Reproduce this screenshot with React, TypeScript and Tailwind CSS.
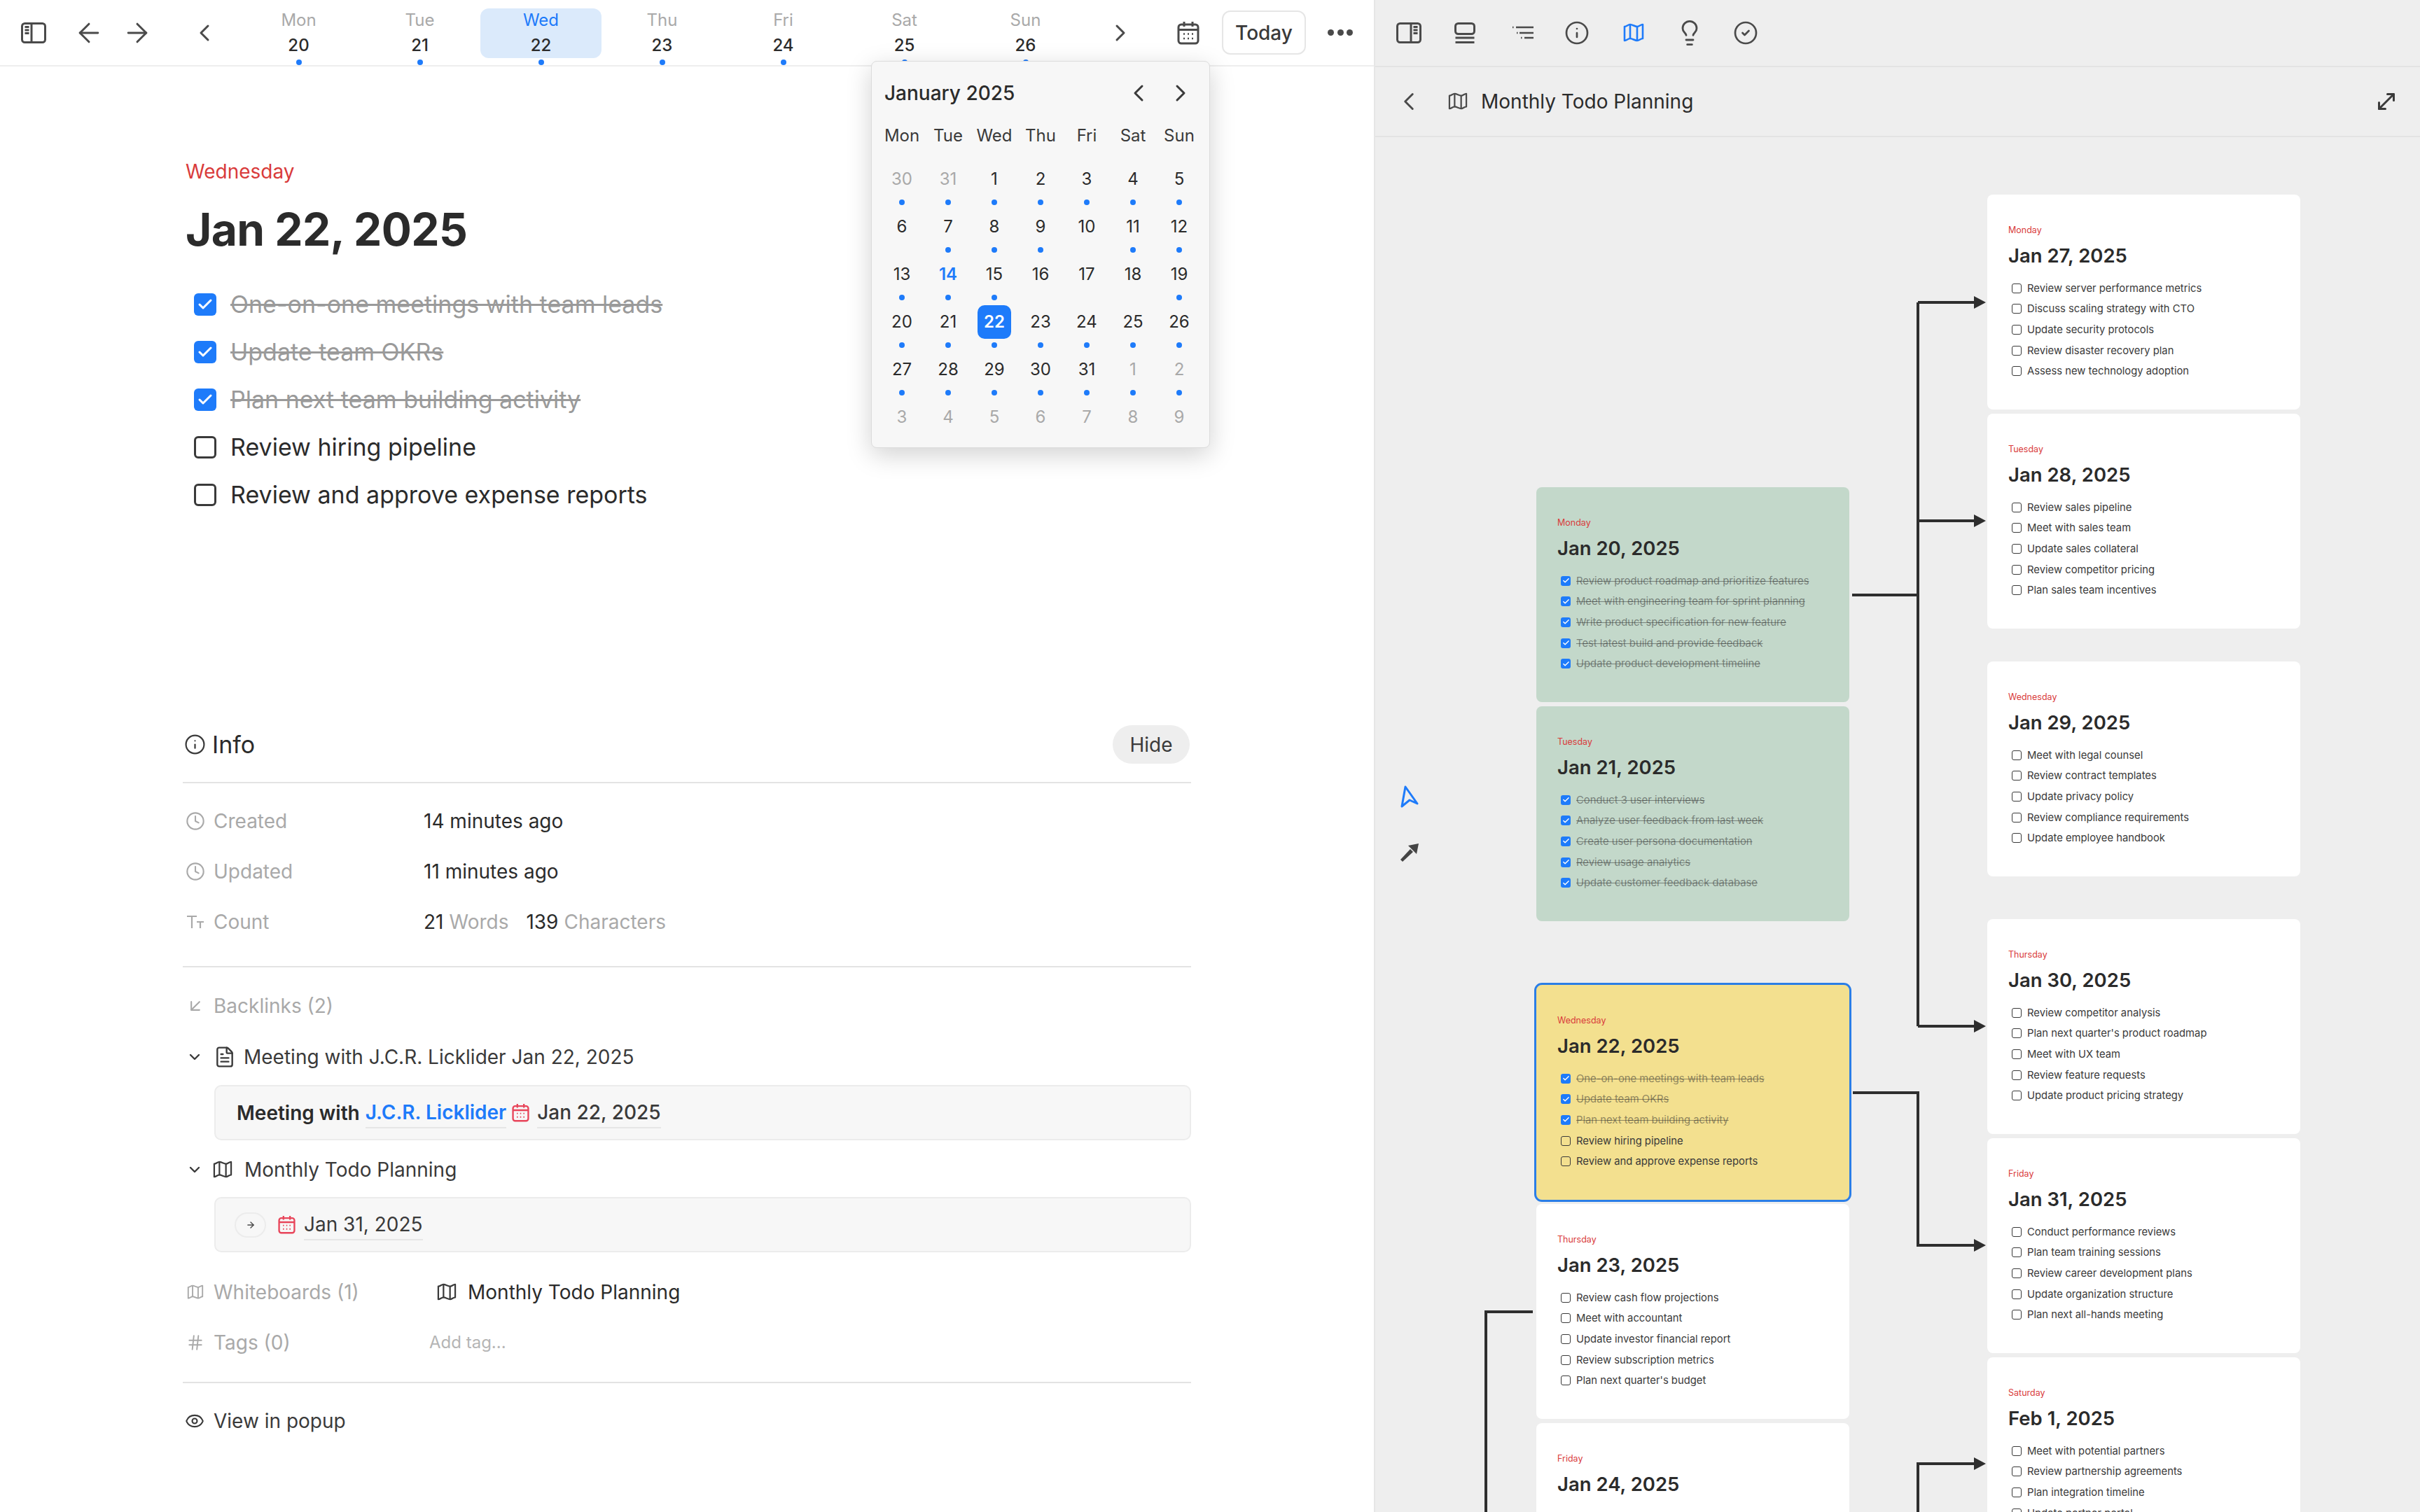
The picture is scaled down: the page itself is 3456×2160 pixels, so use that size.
import {
  ArrowDownLeft,
  ArrowLeft,
  ArrowRight,
  Check,
  ChevronDown,
  ChevronLeft,
  ChevronRight,
  CircleCheck,
  Clock,
  Eye,
  FileText,
  Hash,
  Info,
  Lightbulb,
  MoveDiagonal,
} from 'lucide-react'

const DAYS = [
  { label: 'Mon', date: 20 },
  { label: 'Tue', date: 21 },
  { label: 'Wed', date: 22, active: true },
  { label: 'Thu', date: 23 },
  { label: 'Fri', date: 24 },
  { label: 'Sat', date: 25 },
  { label: 'Sun', date: 26 },
]

const WEEK = ['Mon', 'Tue', 'Wed', 'Thu', 'Fri', 'Sat', 'Sun']

// [date, muted, has dot]
const MONTH: [number, boolean, boolean][] = [
  [30, true, true], [31, true, true], [1, false, true], [2, false, true], [3, false, true], [4, false, true], [5, false, true],
  [6, false, false], [7, false, true], [8, false, true], [9, false, true], [10, false, false], [11, false, true], [12, false, true],
  [13, false, true], [14, false, true], [15, false, true], [16, false, false], [17, false, false], [18, false, false], [19, false, true],
  [20, false, true], [21, false, true], [22, false, true], [23, false, true], [24, false, true], [25, false, true], [26, false, true],
  [27, false, true], [28, false, true], [29, false, true], [30, false, true], [31, false, true], [1, true, true], [2, true, true],
  [3, true, false], [4, true, false], [5, true, false], [6, true, false], [7, true, false], [8, true, false], [9, true, false],
]

interface CardData {
  pos: string
  day: string
  title: string
  items: string[]
  done?: number
  tone?: string
  selected?: boolean
}

const CARDS: CardData[] = [
  {
    pos: 'left-[230px] top-[500px]',
    day: 'Monday',
    title: 'Jan 20, 2025',
    tone: 'bg-[#c3d8ca]',
    done: 5,
    items: [
      'Review product roadmap and prioritize features',
      'Meet with engineering team for sprint planning',
      'Write product specification for new feature',
      'Test latest build and provide feedback',
      'Update product development timeline',
    ],
  },
  {
    pos: 'left-[230px] top-[813px]',
    day: 'Tuesday',
    title: 'Jan 21, 2025',
    tone: 'bg-[#c3d8ca]',
    done: 5,
    items: [
      'Conduct 3 user interviews',
      'Analyze user feedback from last week',
      'Create user persona documentation',
      'Review usage analytics',
      'Update customer feedback database',
    ],
  },
  {
    pos: 'left-[230px] top-[1211px]',
    day: 'Wednesday',
    title: 'Jan 22, 2025',
    tone: 'bg-[#f3e08f]',
    done: 3,
    selected: true,
    items: [
      'One-on-one meetings with team leads',
      'Update team OKRs',
      'Plan next team building activity',
      'Review hiring pipeline',
      'Review and approve expense reports',
    ],
  },
  {
    pos: 'left-[230px] top-[1524px]',
    day: 'Thursday',
    title: 'Jan 23, 2025',
    items: [
      'Review cash flow projections',
      'Meet with accountant',
      'Update investor financial report',
      'Review subscription metrics',
      "Plan next quarter's budget",
    ],
  },
  {
    pos: 'left-[230px] top-[1837px]',
    day: 'Friday',
    title: 'Jan 24, 2025',
    items: [''],
  },
  {
    pos: 'left-[874px] top-[82px]',
    day: 'Monday',
    title: 'Jan 27, 2025',
    items: [
      'Review server performance metrics',
      'Discuss scaling strategy with CTO',
      'Update security protocols',
      'Review disaster recovery plan',
      'Assess new technology adoption',
    ],
  },
  {
    pos: 'left-[874px] top-[395px]',
    day: 'Tuesday',
    title: 'Jan 28, 2025',
    items: [
      'Review sales pipeline',
      'Meet with sales team',
      'Update sales collateral',
      'Review competitor pricing',
      'Plan sales team incentives',
    ],
  },
  {
    pos: 'left-[874px] top-[749px]',
    day: 'Wednesday',
    title: 'Jan 29, 2025',
    items: [
      'Meet with legal counsel',
      'Review contract templates',
      'Update privacy policy',
      'Review compliance requirements',
      'Update employee handbook',
    ],
  },
  {
    pos: 'left-[874px] top-[1117px]',
    day: 'Thursday',
    title: 'Jan 30, 2025',
    items: [
      'Review competitor analysis',
      "Plan next quarter's product roadmap",
      'Meet with UX team',
      'Review feature requests',
      'Update product pricing strategy',
    ],
  },
  {
    pos: 'left-[874px] top-[1430px]',
    day: 'Friday',
    title: 'Jan 31, 2025',
    items: [
      'Conduct performance reviews',
      'Plan team training sessions',
      'Review career development plans',
      'Update organization structure',
      'Plan next all-hands meeting',
    ],
  },
  {
    pos: 'left-[874px] top-[1743px]',
    day: 'Saturday',
    title: 'Feb 1, 2025',
    items: [
      'Meet with potential partners',
      'Review partnership agreements',
      'Plan integration timeline',
      'Update partner portal',
    ],
  },
]

function PanelIcon({ className = '' }: { className?: string }): JSX.Element {
  return (
    <svg viewBox="0 0 36 30" className={`h-[30px] w-[36px] text-[#4a4a4a] ${className}`} fill="none" stroke="currentColor" strokeWidth="3">
      <rect x="1.5" y="1.5" width="33" height="27" rx="4" />
      <path d="M15 2v26M5.5 6.5h6M5.5 11h6M5.5 15.500h6" />
    </svg>
  )
}

function BottomPanelIcon(): JSX.Element {
  return (
    <svg viewBox="0 0 30 30" className="h-[30px] w-[30px] text-[#4a4a4a]" fill="none" stroke="currentColor" strokeWidth="3">
      <rect x="1.5" y="1.5" width="27" height="15" rx="4" />
      <path d="M1.500 22h27M1.500 28.500h27" />
    </svg>
  )
}

function TocIcon(): JSX.Element {
  return (
    <svg viewBox="0 0 32 24" className="h-[24px] w-[32px] text-[#4a4a4a]" fill="none" stroke="currentColor" strokeWidth="2.600">
      <path d="M6 4h25M11 12h20M18 19h13" />
      <path d="M1 4h1.500M7 12h1.500M13 19h1.500" />
    </svg>
  )
}

function MapIcon({ className = 'h-[28px] w-[30px] text-[#4a4a4a]', width = 2.6 }: { className?: string; width?: number }): JSX.Element {
  return (
    <svg viewBox="0 0 30 28" className={className} fill="none" stroke="currentColor" strokeWidth={width} strokeLinejoin="round">
      <path d="M2 5c3 0 5-3 8-3s7 3 10 3 5-3 8-3v20c-3 0-5 3-8 3s-7-3-10-3-5 3-8 3z" />
      <path d="M10 2v21M20 5v20" />
    </svg>
  )
}

function CalendarIcon({ className }: { className: string }): JSX.Element {
  return (
    <svg viewBox="0 0 32 34" className={className} fill="none" stroke="currentColor" strokeWidth="3">
      <rect x="2" y="5" width="28" height="27" rx="4" />
      <path d="M2 12.500h28M10 1v7M22 1v7" />
      <path d="M9 18.500h2M15 18.500h2M21 18.500h2M9 25h2M15 25h2M21 25h2" strokeWidth="2.400" />
    </svg>
  )
}

function TypeIcon(): JSX.Element {
  return (
    <svg viewBox="0 0 26 22" className="h-[22px] w-[26px] text-[#a9a9a9]" fill="none" stroke="currentColor" strokeWidth="2.200">
      <path d="M1 3h14M8 3v17M15 11h10M20 11v9" />
    </svg>
  )
}

function NavIcon(): JSX.Element {
  return (
    <svg viewBox="0 0 26 32" className="h-[32px] w-[26px] text-[#1e7bfa]" fill="none" stroke="currentColor" strokeWidth="3" strokeLinejoin="round">
      <path d="M7 2 24 26l-11-5-11 9z" />
    </svg>
  )
}

function LineToolIcon(): JSX.Element {
  return (
    <svg viewBox="0 0 26 26" className="h-[26px] w-[26px] text-[#444444]" fill="currentColor">
      <path d="M0 23 14 8l4 4L3 26z" />
      <path d="M11 3l15-3-3 15z" />
    </svg>
  )
}

function TaskCheckbox({ checked, large }: { checked: boolean; large?: boolean }): JSX.Element {
  const size = large ? 'h-[32px] w-[32px] rounded-[6px]' : 'h-[14px] w-[14px] rounded-[3px]'
  if (checked) {
    return (
      <span className={`flex shrink-0 items-center justify-center bg-[#1e7bfa] ${size}`}>
        <Check className={large ? 'h-[24px] w-[24px] text-white' : 'h-[11px] w-[11px] text-white'} strokeWidth={3} />
      </span>
    )
  }
  return (
    <span className={`shrink-0 ${size} ${large ? 'border-[3px] border-[#3a3a3a]' : 'border-[1.5px] border-[#3a3a3a]'}`} />
  )
}

function Card({ pos, day, title, items, done = 0, tone = 'bg-white', selected }: CardData): JSX.Element {
  return (
    <div
      className={`absolute h-[307px] w-[447px] overflow-hidden rounded-[8px] pl-[30px] pt-[41px] ${pos} ${tone} ${
        selected ? 'outline-[3px] outline-[#2b7ee6]' : ''
      }`}
    >
      <div className="text-[12.500px] leading-[20px] text-[#d93b3b]">{day}</div>
      <div className="mt-[8px] text-[27.500px] font-semibold leading-[36px] text-[#2b2b2b]">{title}</div>
      <div className="mt-[14px]">
        {items.map((item, i) => (
          <div key={item} className="flex h-[29.600px] items-center gap-[8px] pl-[5px]">
            <TaskCheckbox checked={i < done} />
            <span
              className={`whitespace-nowrap text-[14.800px] leading-[20px] ${
                i < done ? 'text-[#2b2b2b]/50 line-through' : 'text-[#3a3a3a]'
              }`}
            >
              {item}
            </span>
          </div>
        ))}
      </div>
    </div>
  )
}

function Connectors(): JSX.Element {
  const heads = [432, 744, 1466, 1779, 2091]
  return (
    <svg viewBox="1964 196 1492 1964" className="absolute left-0 top-0 h-[1964px] w-[1492px] text-[#2e2e2e]" fill="none">
      <path
        d="M2645 850H2739M2739 432V1466M2739 432H2822M2739 744H2822M2739 1466H2822M2646 1561H2739V1779H2822M2739 2160V2091H2822M2189 1874H2122V2160"
        stroke="currentColor"
        strokeWidth="4"
      />
      {heads.map((y) => (
        <path key={y} d={`M2819 ${y - 9}L2836 ${y}L2819 ${y + 9}Z`} fill="currentColor" />
      ))}
    </svg>
  )
}

function CalendarPopup(): JSX.Element {
  return (
    <div className="absolute left-[1244px] top-[87px] h-[553px] w-[484px] rounded-[8px] border border-[#dcdcdc] bg-[#f7f7f7] pl-[10px] shadow-[0_10px_36px_rgba(0,0,0,0.18)]">
      <div className="flex h-[90px] items-center pl-[8px]">
        <span className="w-[343px] text-[28px] font-medium leading-[36px] text-[#2b2b2b]">January 2025</span>
        <ChevronLeft className="h-[40px] w-[40px] text-[#3a3a3a]" strokeWidth={1.800} />
        <ChevronRight className="ml-[20px] h-[40px] w-[40px] text-[#3a3a3a]" strokeWidth={1.800} />
      </div>
      <div className="grid w-[462px] grid-cols-7">
        {WEEK.map((w) => (
          <div key={w} className="text-center text-[24px] leading-[32px] text-[#3a3a3a]">
            {w}
          </div>
        ))}
      </div>
      <div className="mt-[22px] grid w-[462px] grid-cols-7">
        {MONTH.map(([date, muted, dot], i) => {
          const selected = i === 23
          const today = i === 15
          return (
            <div key={i} className="flex h-[68px] flex-col items-center">
              <span
                className={`flex h-[48px] w-[48px] items-center justify-center rounded-[10px] text-[24px] ${
                  selected
                    ? 'bg-[#1e7bfa] font-semibold text-white'
                    : today
                    ? 'font-semibold text-[#1e7bfa]'
                    : muted
                    ? 'text-[#a9a9a9]'
                    : 'text-[#2b2b2b]'
                }`}
              >
                {date}
              </span>
              {dot && <span className="mt-[5px] h-[8px] w-[8px] rounded-full bg-[#1e7bfa]" />}
            </div>
          )
        })}
      </div>
    </div>
  )
}

function TopBar(): JSX.Element {
  return (
    <div className="flex h-[95px] shrink-0 items-center border-b-2 border-[#eeeeee] pl-[30px] text-[#4a4a4a]">
      <PanelIcon />
      <ArrowLeft className="ml-[39px] h-[44px] w-[44px]" strokeWidth={1.600} />
      <ArrowRight className="ml-[25px] h-[44px] w-[44px]" strokeWidth={1.600} />
      <ChevronLeft className="ml-[54px] h-[40px] w-[40px]" strokeWidth={1.800} />
      <div className="ml-[28px] flex h-full">
        {DAYS.map((d) => (
          <div key={d.label} className="flex w-[173px] flex-col items-center pt-[12px]">
            <div
              className={`flex h-[72px] w-[173px] flex-col items-center rounded-[12px] pt-[5px] ${
                d.active ? 'bg-[#dbeafb] text-[#1e7bfa]' : 'text-[#a9a9a9]'
              }`}
            >
              <span className="text-[24px] leading-[24px]">{d.label}</span>
              <span className="mt-[12px] text-[24px] font-medium leading-[24px] text-[#2b2b2b]">{d.date}</span>
            </div>
            <span className="mt-[2px] h-[8px] w-[8px] rounded-full bg-[#1e7bfa]" />
          </div>
        ))}
      </div>
      <ChevronRight className="ml-[29px] h-[40px] w-[40px]" strokeWidth={1.800} />
      <CalendarIcon className="ml-[61px] h-[34px] w-[32px]" />
      <div className="ml-[32px] flex h-[63px] w-[120px] items-center justify-center rounded-[12px] border-2 border-[#e6e6e6] text-[28px] font-medium text-[#3a3a3a]">
        Today
      </div>
      <div className="ml-[31px] flex w-[36px] justify-between">
        <span className="h-[9px] w-[9px] rounded-full bg-[#4a4a4a]" />
        <span className="h-[9px] w-[9px] rounded-full bg-[#4a4a4a]" />
        <span className="h-[9px] w-[9px] rounded-full bg-[#4a4a4a]" />
      </div>
    </div>
  )
}

function TaskRow({ text, done }: { text: string; done?: boolean }): JSX.Element {
  return (
    <div className="flex h-[68px] items-center gap-[20px] pl-[16px]">
      <TaskCheckbox checked={!!done} large />
      <span className={`text-[34px] leading-[44px] ${done ? 'text-[#9a9a9a] line-through' : 'text-[#2b2b2b]'}`}>{text}</span>
    </div>
  )
}

function MetaRow({ icon, label, children }: { icon: JSX.Element; label: string; children?: React.ReactNode }): JSX.Element {
  return (
    <div className="flex h-[72px] items-center text-[28px] text-[#2b2b2b]">
      <div className="flex w-[344px] shrink-0 items-center pl-[5px] text-[#a9a9a9]">
        <span className="flex w-[26px] justify-center">{icon}</span>
        <span className="ml-[13px]">{label}</span>
      </div>
      {children}
    </div>
  )
}

function DailyPane(): JSX.Element {
  return (
    <div className="relative flex h-full w-[1962px] shrink-0 flex-col bg-white">
      <TopBar />
      <div className="w-[1701px] pl-[261px] pt-[130px]">
        <div className="pl-[4px] text-[28px] leading-[40px] text-[#d93b3b]">Wednesday</div>
        <div className="mt-[23px] pl-[4px] text-[64px] font-bold leading-[80px] tracking-[-0.6px] text-[#2b2b2b]">Jan 22, 2025</div>
        <div className="mt-[33px]">
          <TaskRow text="One-on-one meetings with team leads" done />
          <TaskRow text="Update team OKRs" done />
          <TaskRow text="Plan next team building activity" done />
          <TaskRow text="Review hiring pipeline" />
          <TaskRow text="Review and approve expense reports" />
        </div>

        {/* Info */}
        <div className="mt-[295px] flex h-[55px] items-center pl-[2px]">
          <Info className="h-[31px] w-[31px] text-[#3a3a3a]" strokeWidth={1.700} />
          <span className="ml-[9px] text-[34px] text-[#2b2b2b]">Info</span>
          <span className="ml-auto mr-[2px] flex h-[55px] w-[110px] items-center justify-center rounded-full bg-[#eeeeee] text-[28px] text-[#3a3a3a]">
            Hide
          </span>
        </div>
        <div className="mt-[26px] h-[2px] bg-[#e3e3e3]" />
        <div className="mt-[18px]">
          <MetaRow icon={<Clock className="h-[28px] w-[28px] shrink-0" strokeWidth={1.800} />} label="Created">
            14 minutes ago
          </MetaRow>
          <MetaRow icon={<Clock className="h-[28px] w-[28px] shrink-0" strokeWidth={1.800} />} label="Updated">
            11 minutes ago
          </MetaRow>
          <MetaRow icon={<TypeIcon />} label="Count">
            21<span className="ml-[8px] text-[#a9a9a9]">Words</span>
            <span className="ml-[25px]">139</span>
            <span className="ml-[8px] text-[#a9a9a9]">Characters</span>
          </MetaRow>
        </div>
        <div className="mt-[27px] h-[2px] bg-[#e3e3e3]" />
        <div className="mt-[19px]">
          <MetaRow icon={<ArrowDownLeft className="h-[28px] w-[28px] shrink-0" strokeWidth={1.800} />} label="Backlinks (2)" />
        </div>

        {/* Backlinks */}
        <div className="mt-[17px] flex h-[40px] items-center pl-[5px] text-[28px] text-[#3a3a3a]">
          <ChevronDown className="h-[24px] w-[24px]" strokeWidth={2.400} />
          <FileText className="ml-[15px] h-[32px] w-[32px]" strokeWidth={1.800} />
          <span className="ml-[11px]">Meeting with J.C.R. Licklider Jan 22, 2025</span>
        </div>
        <div className="ml-[45px] mt-[20px] flex h-[79px] w-[1395px] items-center rounded-[10px] border-2 border-[#ececec] bg-[#f7f7f7] pl-[30px] text-[28px]">
          <span className="font-semibold text-[#2b2b2b]">Meeting with</span>
          <span className="ml-[8px] border-b-2 border-[#e6e6e6] font-semibold text-[#1e7bfa]">J.C.R. Licklider</span>
          <CalendarIcon className="ml-[8px] h-[27px] w-[25px] text-[#e8455a]" />
          <span className="ml-[11px] border-b-2 border-[#e6e6e6] font-medium text-[#3a3a3a]">Jan 22, 2025</span>
        </div>
        <div className="mt-[22px] flex h-[40px] items-center pl-[5px] text-[28px] text-[#3a3a3a]">
          <ChevronDown className="h-[24px] w-[24px]" strokeWidth={2.400} />
          <MapIcon className="ml-[14px] h-[26px] w-[28px]" width={2.400} />
          <span className="ml-[17px]">Monthly Todo Planning</span>
        </div>
        <div className="ml-[45px] mt-[19px] flex h-[79px] w-[1395px] items-center rounded-[10px] border-2 border-[#ececec] bg-[#f7f7f7] pl-[27px] text-[28px]">
          <span className="flex h-[36px] w-[45px] items-center justify-center rounded-full border-2 border-[#ececec]">
            <ArrowRight className="h-[14px] w-[14px] text-[#4a4a4a]" strokeWidth={2.400} />
          </span>
          <CalendarIcon className="ml-[17px] h-[27px] w-[25px] text-[#e8455a]" />
          <span className="ml-[12px] border-b-2 border-[#e6e6e6] text-[#3a3a3a]">Jan 31, 2025</span>
        </div>

        <div className="mt-[21px]">
          <MetaRow icon={<MapIcon className="h-[22px] w-[26px]" width={2.400} />} label="Whiteboards (1)">
            <span className="ml-[19px] flex items-center">
              <MapIcon className="h-[26px] w-[28px] text-[#3a3a3a]" width={2.400} />
              <span className="ml-[16px]">Monthly Todo Planning</span>
            </span>
          </MetaRow>
          <MetaRow icon={<Hash className="h-[26px] w-[26px]" strokeWidth={1.800} />} label="Tags (0)">
            <span className="ml-[8px] text-[24px] text-[#b5b5b5]">Add tag...</span>
          </MetaRow>
        </div>
        <div className="mt-[20px] h-[2px] bg-[#e3e3e3]" />
        <div className="mt-[34px] flex h-[40px] items-center pl-[3px] text-[28px] text-[#3a3a3a]">
          <Eye className="h-[28px] w-[28px]" strokeWidth={1.800} />
          <span className="ml-[13px]">View in popup</span>
        </div>
      </div>
      <CalendarPopup />
    </div>
  )
}

function WhiteboardPane(): JSX.Element {
  return (
    <div className="flex h-full min-w-0 flex-1 flex-col border-l-2 border-[#e6e6e6] bg-[#eeeeee]">
      <div className="flex h-[96px] shrink-0 items-center border-b-2 border-[#e3e3e3] pl-[30px] text-[#4a4a4a]">
        <PanelIcon className="-scale-x-100" />
        <span className="ml-[47px]"><BottomPanelIcon /></span>
        <span className="ml-[52px]"><TocIcon /></span>
        <Info className="ml-[43px] h-[36px] w-[36px]" strokeWidth={1.800} />
        <MapIcon className="ml-[48px] h-[28px] w-[30px] text-[#1e7bfa]" />
        <Lightbulb className="ml-[45px] h-[40px] w-[40px]" strokeWidth={1.700} />
        <CircleCheck className="ml-[42px] h-[36px] w-[36px]" strokeWidth={1.800} />
      </div>
      <div className="flex h-[100px] shrink-0 items-center border-b-2 border-[#e3e3e3] pl-[27px] pr-[30px]">
        <ChevronLeft className="h-[42px] w-[42px] text-[#4a4a4a]" strokeWidth={1.700} />
        <MapIcon className="ml-[35px] h-[26px] w-[28px] text-[#4a4a4a]" width={2.400} />
        <span className="ml-[19px] text-[28px] text-[#2b2b2b]">Monthly Todo Planning</span>
        <MoveDiagonal className="ml-auto h-[36px] w-[36px] text-[#3a3a3a]" strokeWidth={2} />
      </div>
      {/* Whiteboard canvas: items sit at free positions */}
      <div className="relative min-h-0 flex-1 overflow-hidden">
        <Connectors />
        {CARDS.map((card) => (
          <Card key={card.title} {...card} />
        ))}
        <div className="absolute left-[36px] top-[926px]">
          <NavIcon />
        </div>
        <div className="absolute left-[36px] top-[1009px]">
          <LineToolIcon />
        </div>
      </div>
    </div>
  )
}

export default function App(): JSX.Element {
  return (
    <div className="flex h-[2160px] w-[3456px] overflow-hidden bg-white font-['Inter',sans-serif]">
      <DailyPane />
      <WhiteboardPane />
    </div>
  )
}
